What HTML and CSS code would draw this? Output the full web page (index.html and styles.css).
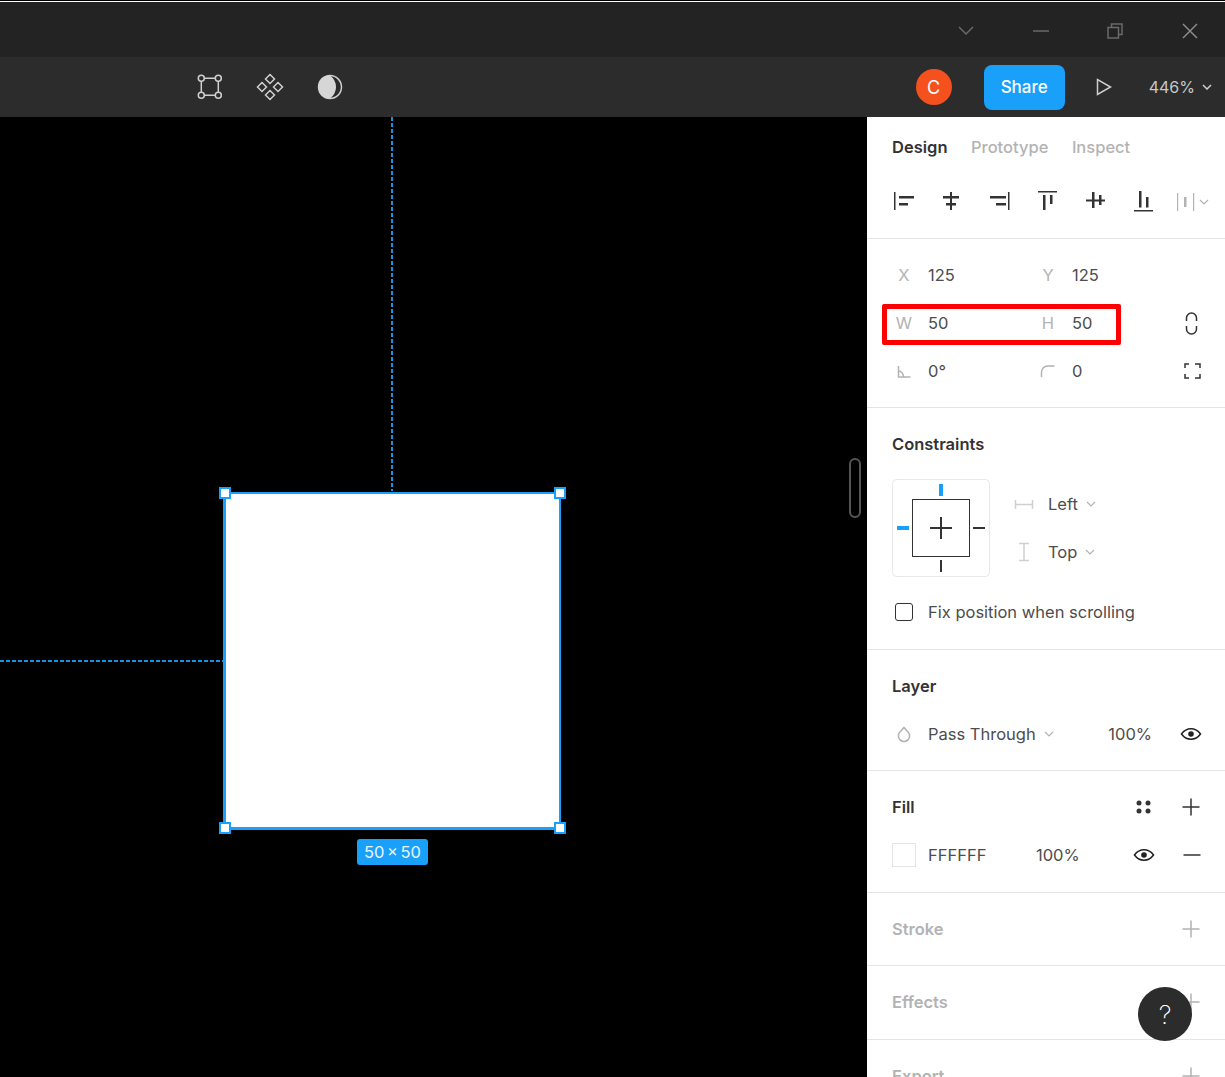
FILE: index.html
```html
<!DOCTYPE html>
<html lang="en">
<head>
    <meta charset="UTF-8">
    <title>Figma - Rectangle</title>
    <link rel="stylesheet" href="styles.css">
</head>
<body>
    <div class="titlebar">
        <svg class="win-icon" width="16" height="10" viewBox="0 0 16 10"><path d="M1 1l7 7 7-7" class="win-line"/></svg>
        <svg class="win-icon" width="16" height="2" viewBox="0 0 16 2"><path d="M0 1h16" class="win-line"/></svg>
        <svg class="win-icon" width="16" height="16" viewBox="0 0 16 16"><path d="M1 4.500h10.500v10.500h-10.500zM4.500 4v-3h10.500v10.500h-3" class="win-line"/></svg>
        <svg class="win-icon win-close" width="16" height="16" viewBox="0 0 16 16"><path d="M1 1l14 14M15 1L1 15" class="win-line"/></svg>
    </div>

    <div class="toolbar">
        <!-- frame -->
        <svg class="tool" width="30" height="30" viewBox="0 0 30 30"><g class="tool-line"><path d="M9 6.300h12M9 23.300h12M6.300 9v12M23.300 9v12"/><circle cx="6.300" cy="6.300" r="3"/><circle cx="23.300" cy="6.300" r="3"/><circle cx="6.300" cy="23.300" r="3"/><circle cx="23.300" cy="23.300" r="3"/></g></svg>
        <!-- component -->
        <svg class="tool" width="30" height="30" viewBox="0 0 30 30"><g class="tool-line"><path d="M15 2.500l4.500 4.500-4.500 4.500-4.500-4.500zM15 18.500l4.500 4.500-4.500 4.500-4.500-4.500zM7 10.500l4.500 4.500-4.500 4.500-4.500-4.500zM23 10.500l4.500 4.500-4.500 4.500-4.500-4.500z"/></g></svg>
        <!-- mask -->
        <svg class="tool" width="30" height="30" viewBox="0 0 30 30"><circle cx="15" cy="15" r="11.500" class="tool-line"/><path d="M15 3.500a11.500 11.500 0 0 0 0 23a14 14 0 0 0 0-23z" class="tool-fill"/></svg>

        <div class="toolbar-right">
            <div class="avatar">C</div>
            <button class="share">Share</button>
            <svg class="play" width="16" height="18" viewBox="0 0 16 18"><path d="M1.500 1.500v15l13-7.500z" class="tool-line"/></svg>
            <span class="zoom-level">446%</span>
            <svg class="zoom-caret" width="10" height="6" viewBox="0 0 10 6"><path d="M1 1l4 4 4-4" class="tool-line"/></svg>
        </div>
    </div>

    <div class="workspace">
        <div class="canvas">
            <div class="guide guide-v"></div>
            <div class="guide guide-h"></div>
            <div class="selection">
                <span class="handle handle-tl"></span>
                <span class="handle handle-tr"></span>
                <span class="handle handle-bl"></span>
                <span class="handle handle-br"></span>
            </div>
            <div class="size-label">50 × 50</div>
            <div class="scroll-thumb"></div>
        </div>

        <div class="sidebar">
            <section class="panel panel-tabs">
                <div class="tabs">
                    <span class="tab tab-active">Design</span>
                    <span class="tab">Prototype</span>
                    <span class="tab">Inspect</span>
                </div>
                <div class="align-row">
                    <svg class="align" width="24" height="24" viewBox="0 0 24 24"><path d="M3 3h1.500v18h-1.500zM8 7h15v2.500h-15zM8 14h9v2.500h-9z"/></svg>
                    <svg class="align" width="24" height="24" viewBox="0 0 24 24"><path d="M11 3h2v18h-2zM4 7h16v2.500h-16zM7 14h10v2.500h-10z"/></svg>
                    <svg class="align" width="24" height="24" viewBox="0 0 24 24"><path d="M21 3h1.500v18h-1.500zM3 7h16v2.500h-16zM9 14h10v2.500h-10z"/></svg>
                    <svg class="align" width="24" height="24" viewBox="0 0 24 24"><path d="M3 2h19v1.500h-19zM8 6h2.500v15h-2.500zM15 6h2.500v9h-2.500z"/></svg>
                    <svg class="align" width="24" height="24" viewBox="0 0 24 24"><path d="M3 10.500h19v2h-19zM9 3h2.500v16h-2.500zM16 6h2.500v10h-2.500z"/></svg>
                    <svg class="align" width="24" height="24" viewBox="0 0 24 24"><path d="M3 21h19v1.500h-19zM8 2h2.500v16.500h-2.500zM15 8h2.500v10.500h-2.500z"/></svg>
                    <svg class="align align-off" width="36" height="24" viewBox="0 0 36 24"><path d="M3 4h1.200v18h-1.200zM10 8h2.500v10h-2.500zM19 4h1.200v18h-1.200z"/><path d="M26 11l4 4 4-4" class="caret-line"/></svg>
                </div>
            </section>

            <section class="panel">
                <div class="row">
                    <div class="field"><span class="field-label">X</span><span class="value">125</span></div>
                    <div class="field"><span class="field-label">Y</span><span class="value">125</span></div>
                </div>
                <div class="row row-marked">
                    <div class="field"><span class="field-label">W</span><span class="value">50</span></div>
                    <div class="field"><span class="field-label">H</span><span class="value">50</span></div>
                    <svg class="icon" width="24" height="24" viewBox="0 0 24 24"><path d="M6.500 10v-3a5 5 0 0 1 10 0v3M6.500 15v3a5 5 0 0 0 10 0v-3" class="dark-line"/></svg>
                    <div class="red-box"></div>
                </div>
                <div class="row">
                    <div class="field">
                        <svg class="icon" width="24" height="24" viewBox="0 0 24 24"><path d="M6.500 7v11h12M6.500 12c3 0 5 3 5 6" class="grey-line"/></svg>
                        <span class="value">0°</span>
                    </div>
                    <div class="field">
                        <svg class="icon" width="24" height="24" viewBox="0 0 24 24"><path d="M5.500 18v-5a6 6 0 0 1 6-6h7" class="grey-line"/></svg>
                        <span class="value">0</span>
                    </div>
                    <svg class="icon" width="24" height="24" viewBox="0 0 24 24"><path d="M5 9v-4h4M15 5h5v4M20 15v4h-5M9 19h-4v-4" class="dark-line"/></svg>
                </div>
            </section>

            <section class="panel panel-constraints">
                <h3 class="panel-title">Constraints</h3>
                <div class="constraints">
                    <svg class="constraint-box" width="98" height="98" viewBox="0 0 98 98">
                        <rect x="0.500" y="0.500" width="97" height="97" rx="4" fill="#fff" stroke="#e8e8e8"/>
                        <rect x="20.500" y="20.500" width="57" height="57" fill="none" stroke="#333"/>
                        <path d="M38 49h22M49 38v22" stroke="#333" stroke-width="2"/>
                        <rect x="47" y="5" width="4" height="12" fill="#18a0fb"/>
                        <rect x="5" y="47" width="12" height="4" fill="#18a0fb"/>
                        <rect x="81" y="48" width="12" height="2" fill="#333"/>
                        <rect x="48" y="81" width="2" height="12" fill="#333"/>
                    </svg>
                    <div class="constraint-menus">
                        <div class="menu-row">
                            <svg class="icon" width="24" height="24" viewBox="0 0 24 24"><path d="M3.500 8v9M20.500 8v9M3.500 12.500h17" class="light-line"/></svg>
                            <span class="value">Left</span>
                            <svg class="caret" width="10" height="6" viewBox="0 0 10 6"><path d="M1 1l4 4 4-4" class="caret-line"/></svg>
                        </div>
                        <div class="menu-row">
                            <svg class="icon" width="24" height="24" viewBox="0 0 24 24"><path d="M7 3.500h10M7 20.500h10M12 3.500v17" class="light-line"/></svg>
                            <span class="value">Top</span>
                            <svg class="caret" width="10" height="6" viewBox="0 0 10 6"><path d="M1 1l4 4 4-4" class="caret-line"/></svg>
                        </div>
                    </div>
                </div>
                <div class="row row-check">
                    <span class="check-wrap"><span class="checkbox"></span></span>
                    <span class="value">Fix position when scrolling</span>
                </div>
            </section>

            <section class="panel">
                <h3 class="panel-title">Layer</h3>
                <div class="row">
                    <svg class="icon" width="24" height="24" viewBox="0 0 24 24"><path d="M12 5.500l4 4.500a5.600 5.600 0 1 1-8 0z" class="grey-line"/></svg>
                    <span class="value">Pass Through</span>
                    <svg class="caret" width="10" height="6" viewBox="0 0 10 6"><path d="M1 1l4 4 4-4" class="caret-line"/></svg>
                    <span class="value layer-opacity">100%</span>
                    <svg class="icon eye" width="24" height="24" viewBox="0 0 24 24"><path d="M2.500 12c2.500-3.500 5.800-5.200 9.500-5.200s7 1.700 9.500 5.200c-2.500 3.500-5.800 5.200-9.500 5.200s-7-1.700-9.500-5.200z" class="eye-line"/><circle cx="12" cy="12" r="2.800" fill="#222"/></svg>
                </div>
            </section>

            <section class="panel panel-tall">
                <div class="panel-head">
                    <h3 class="panel-title">Fill</h3>
                    <svg class="icon head-styles" width="24" height="24" viewBox="0 0 24 24"><circle cx="8" cy="8" r="2.500" fill="#333"/><circle cx="17" cy="8" r="2.500" fill="#333"/><circle cx="8" cy="16" r="2.500" fill="#333"/><circle cx="17" cy="16" r="2.500" fill="#333"/></svg>
                    <svg class="icon" width="24" height="24" viewBox="0 0 24 24"><path d="M3.500 12h17M12 3.500v17" class="dark-line"/></svg>
                </div>
                <div class="row">
                    <span class="swatch"></span>
                    <span class="value fill-hex">FFFFFF</span>
                    <span class="value fill-opacity">100%</span>
                    <svg class="icon fill-eye" width="24" height="24" viewBox="0 0 24 24"><path d="M2.500 12c2.500-3.500 5.800-5.200 9.500-5.200s7 1.700 9.500 5.200c-2.500 3.500-5.800 5.200-9.500 5.200s-7-1.700-9.500-5.200z" class="eye-line"/><circle cx="12" cy="12" r="2.800" fill="#222"/></svg>
                    <svg class="icon" width="24" height="24" viewBox="0 0 24 24"><path d="M3.500 12h17" class="dark-line"/></svg>
                </div>
            </section>

            <section class="panel panel-off">
                <div class="panel-head">
                    <h3 class="panel-title">Stroke</h3>
                    <svg class="icon" width="24" height="24" viewBox="0 0 24 24"><path d="M3.500 12h17M12 3.500v17" class="grey-line"/></svg>
                </div>
            </section>
            <section class="panel panel-off panel-tall">
                <div class="panel-head">
                    <h3 class="panel-title">Effects</h3>
                    <svg class="icon" width="24" height="24" viewBox="0 0 24 24"><path d="M3.500 12h17M12 3.500v17" class="grey-line"/></svg>
                </div>
            </section>
            <section class="panel panel-off">
                <div class="panel-head">
                    <h3 class="panel-title">Export</h3>
                    <svg class="icon" width="24" height="24" viewBox="0 0 24 24"><path d="M3.500 12h17M12 3.500v17" class="grey-line"/></svg>
                </div>
            </section>

            <button class="help">?</button>
        </div>
    </div>
</body>
</html>
```

FILE: styles.css
```css
* {
    box-sizing: border-box;
}
body {
    margin: 0;
    height: 1077px;
    overflow: hidden;
    background: #000;
    font-family: Inter, "Liberation Sans", sans-serif;
    font-size: 16.5px;
}
svg {
    display: block;
    flex: none;
}

/* window title bar */
.titlebar {
    height: 56px;
    margin-top: 1px;
    border-top: 1px solid #fff;
    background: #232323;
    display: flex;
    align-items: center;
    justify-content: flex-end;
    padding: 2px 27px 0 0;
    gap: 58.67px;
}
.win-line {
    fill: none;
    stroke: #6a6a6a;
    stroke-width: 1.5;
}
.win-close .win-line {
    stroke: #8a8a8a;
}

/* editor toolbar */
.toolbar {
    height: 60px;
    background: #2c2c2c;
    display: flex;
    align-items: center;
    padding-left: 195px;
    gap: 30px;
}
.tool-line {
    fill: none;
    stroke: #cfcfcf;
    stroke-width: 1.5;
}
.tool-fill {
    fill: #d6d6d6;
}
.toolbar-right {
    margin-left: auto;
    display: flex;
    align-items: center;
    padding-right: 13px;
}
.avatar {
    width: 36px;
    height: 36px;
    border-radius: 50%;
    background: #f4511e;
    color: #fff;
    font-size: 18px;
    display: flex;
    align-items: center;
    justify-content: center;
}
.share {
    width: 81px;
    height: 45px;
    margin-left: 32px;
    border: 0;
    border-radius: 8px;
    background: #18a0fb;
    color: #fff;
    font-family: inherit;
    font-size: 17px;
    font-weight: 500;
}
.play {
    margin-left: 31px;
}
.zoom-level {
    margin-left: 37px;
    color: #c8c8c8;
    font-size: 16px;
}
.zoom-caret {
    margin-left: 7px;
}

.workspace {
    display: flex;
    height: 960px;
}

/* canvas */
.canvas {
    position: relative;
    flex: 1;
    background: #000;
}
.guide {
    position: absolute;
}
.guide-v {
    left: 391px;
    top: 0;
    width: 2px;
    height: 374px;
    background: repeating-linear-gradient(to bottom, #1492e6 0 4px, transparent 4px 6px);
}
.guide-h {
    left: 0;
    top: 543px;
    width: 223px;
    height: 2px;
    background: repeating-linear-gradient(to right, #1492e6 0 4px, transparent 4px 6px);
}
.selection {
    position: absolute;
    left: 223px;
    top: 375px;
    width: 338px;
    height: 338px;
    background: #fff;
    border: solid #18a0fb;
    border-width: 2px 2px 3px 3px;
}
.handle {
    position: absolute;
    width: 12px;
    height: 12px;
    background: #fff;
    border: 2px solid #18a0fb;
}
.handle-tl { left: -7px; top: -7px; }
.handle-tr { right: -7px; top: -7px; }
.handle-bl { left: -7px; bottom: -7px; }
.handle-br { right: -7px; bottom: -7px; }
.size-label {
    position: absolute;
    left: 357px;
    top: 722px;
    width: 71px;
    height: 26px;
    line-height: 26px;
    border-radius: 3px;
    background: #18a0fb;
    color: #e8f6ff;
    font-size: 16.5px;
    word-spacing: -2px;
    text-align: center;
}
.scroll-thumb {
    position: absolute;
    left: 849px;
    top: 341px;
    width: 12px;
    height: 60px;
    border: 2px solid #555;
    border-radius: 6px;
}

/* properties sidebar */
.sidebar {
    position: relative;
    width: 358px;
    background: #fff;
    overflow: hidden;
    color: #444;
}
.panel {
    padding: 12px 0 12px 25px;
    border-bottom: 1px solid #e5e5e5;
}
.panel-tabs {
    height: 122px;
    padding: 0 0 0 25px;
}
.panel-constraints {
    padding-bottom: 13px;
}
.panel-tall {
    padding-bottom: 13px;
}
.tabs {
    height: 60px;
    display: flex;
    align-items: center;
    gap: 23.5px;
}
.tab {
    color: #b3b3b3;
    font-weight: 500;
}
.tab-active {
    color: #333;
    font-weight: 600;
}
.align-row {
    display: flex;
    margin-left: -1px;
    padding-top: 12px;
    gap: 24px;
}
.align {
    fill: #333;
}
.align-off {
    fill: #b3b3b3;
    margin-left: -5px;
}
.caret-line {
    fill: none;
    stroke: #b3b3b3;
    stroke-width: 1.2;
}
.row {
    position: relative;
    height: 48px;
    display: flex;
    align-items: center;
}
.field {
    width: 144px;
    display: flex;
    align-items: center;
}
.field-label {
    width: 24px;
    color: #b3b3b3;
    text-align: center;
}
.value {
    margin-left: 12px;
    color: #4d4d4d;
}
.red-box {
    position: absolute;
    left: -10px;
    top: 5px;
    width: 239px;
    height: 41px;
    border: 5px solid #f00;
    border-radius: 2px;
}
.dark-line {
    fill: none;
    stroke: #333;
    stroke-width: 1.5;
}
.grey-line {
    fill: none;
    stroke: #b3b3b3;
    stroke-width: 1.5;
}
.light-line {
    fill: none;
    stroke: #cfcfcf;
    stroke-width: 1.5;
}
.eye-line {
    fill: none;
    stroke: #222;
    stroke-width: 1.5;
}
.panel-title {
    margin: 0;
    height: 48px;
    line-height: 48px;
    font-size: 16.5px;
    font-weight: 600;
    color: #333;
}
.constraints {
    display: flex;
    margin-top: 11px;
}
.constraint-menus {
    margin: 1px 0 0 22px;
}
.menu-row {
    height: 48px;
    display: flex;
    align-items: center;
}
.caret {
    margin-left: 8px;
}
.row-check {
    margin-top: 11px;
}
.check-wrap {
    width: 24px;
    display: flex;
    justify-content: center;
}
.checkbox {
    width: 18px;
    height: 18px;
    border: 1.5px solid #333;
    border-radius: 3px;
}
.layer-opacity {
    margin-left: auto;
}
.eye {
    margin: 0 22px 0 27px;
}
.panel-head {
    display: flex;
    align-items: center;
    padding-right: 22px;
}
.panel-head .panel-title {
    flex: 1;
}
.head-styles {
    margin-right: 24px;
}
.swatch {
    width: 24px;
    height: 24px;
    border: 1px solid #e5e5e5;
}
.fill-hex {
    width: 96px;
}
.fill-opacity {
    margin-left: 12px;
    width: 96px;
}
.fill-eye {
    margin-right: 24px;
}
.panel-off .panel-title {
    color: #b3b3b3;
}
.help {
    position: absolute;
    right: 33px;
    top: 870px;
    width: 54px;
    height: 54px;
    border: 0;
    border-radius: 50%;
    background: #2c2c2c;
    color: #fff;
    font-family: inherit;
    font-size: 26px;
    font-weight: 200;
}
```
